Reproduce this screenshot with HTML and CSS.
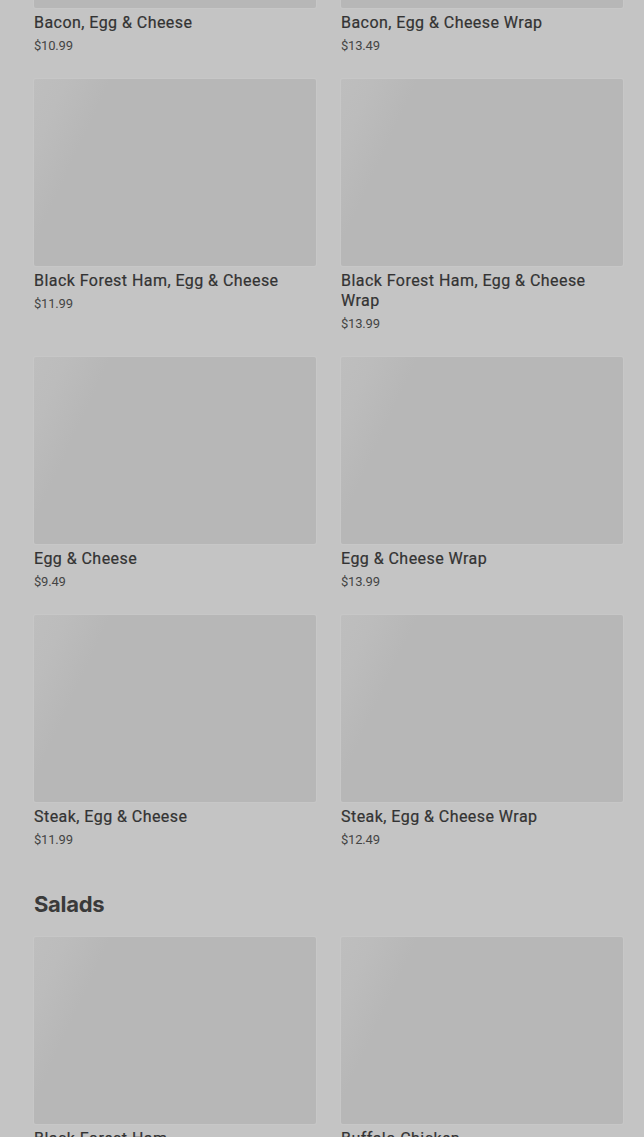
FILE: index.html
```html
<!DOCTYPE html>
<html lang="en">
<head>
  <meta charset="UTF-8" />
  <meta name="viewport" content="width=device-width, initial-scale=1.0" />
  <title>Menu</title>
  <link rel="stylesheet" href="styles.css">
</head>
<body>
  <main class="menu">
    <section class="category">
      <div class="items">
        <div class="item">
          <div class="thumb"></div>
          <div class="name">Bacon, Egg &amp; Cheese</div>
          <div class="price">$10.99</div>
        </div>
        <div class="item">
          <div class="thumb"></div>
          <div class="name">Bacon, Egg &amp; Cheese Wrap</div>
          <div class="price">$13.49</div>
        </div>
        <div class="item">
          <div class="thumb"></div>
          <div class="name">Black Forest Ham, Egg &amp; Cheese</div>
          <div class="price">$11.99</div>
        </div>
        <div class="item">
          <div class="thumb"></div>
          <div class="name">Black Forest Ham, Egg &amp; Cheese Wrap</div>
          <div class="price">$13.99</div>
        </div>
        <div class="item">
          <div class="thumb"></div>
          <div class="name">Egg &amp; Cheese</div>
          <div class="price">$9.49</div>
        </div>
        <div class="item">
          <div class="thumb"></div>
          <div class="name">Egg &amp; Cheese Wrap</div>
          <div class="price">$13.99</div>
        </div>
        <div class="item">
          <div class="thumb"></div>
          <div class="name">Steak, Egg &amp; Cheese</div>
          <div class="price">$11.99</div>
        </div>
        <div class="item">
          <div class="thumb"></div>
          <div class="name">Steak, Egg &amp; Cheese Wrap</div>
          <div class="price">$12.49</div>
        </div>
      </div>
    </section>
    <section class="category">
      <h2>Salads</h2>
      <div class="items">
        <div class="item">
          <div class="thumb"></div>
          <div class="name">Black Forest Ham</div>
          <div class="price">$10.99</div>
        </div>
        <div class="item">
          <div class="thumb"></div>
          <div class="name">Buffalo Chicken</div>
          <div class="price">$11.49</div>
        </div>
      </div>
    </section>
  </main>
</body>
</html>
```
FILE: styles.css
```css
body {
  margin: 0;
  font-family: Roboto, 'Noto Sans', sans-serif;
  background-color: #c4c4c4;
  color: #333;
}
.menu {
  margin-top: -179px;
  padding: 0 21px 0 34px;
}
.category h2 {
  margin: 40px 0 18px;
  font-family: Inter, Roboto, sans-serif;
  font-size: 22px;
  line-height: 30px;
  font-weight: 700;
  letter-spacing: -0.3px;
  color: #3a3a3a;
}
.items {
  display: grid;
  grid-template-columns: 1fr 1fr;
  column-gap: 25px;
  row-gap: 24px;
}
.thumb {
  height: 187px;
  margin-bottom: 5px;
  border-radius: 2px;
  background: linear-gradient(115deg, #bebebe 0, #bcbcbc 30px, #b7b7b7 70px, #b7b7b7 100%);
  box-shadow: 0 0 0 1px rgba(255,255,255,0.06);
}
.name {
  font-size: 16px;
  line-height: 20px;
  font-weight: 400;
  letter-spacing: 0.45px;
  -webkit-text-stroke: 0.2px #333;
}
.price {
  margin-top: 4px;
  font-size: 13px;
  line-height: 18px;
  color: #444;
  letter-spacing: -0.2px;
}
```
